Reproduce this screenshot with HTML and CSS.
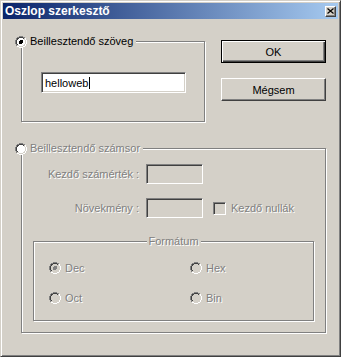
FILE: index.html
```html
<!DOCTYPE html>
<html lang="hu">
<head>
    <meta charset="utf-8">
    <title>Oszlop szerkesztő</title>
    <link rel="stylesheet" href="styles.css">
</head>
<body>
    <svg class="defs" width="0" height="0">
        <symbol id="radio-on" viewBox="0 0 12 12">
            <circle cx="6" cy="6" r="4" fill="#fff"/>
            <path d="M2.1 9.9A5.5 5.5 0 0 1 9.9 2.1" stroke="#808080" fill="none"/>
            <path d="M9.9 2.1A5.5 5.5 0 0 1 2.1 9.9" stroke="#fff" fill="none"/>
            <path d="M2.8 9.2A4.5 4.5 0 0 1 9.2 2.8" stroke="#404040" fill="none"/>
            <path d="M9.2 2.8A4.5 4.5 0 0 1 2.8 9.2" stroke="#d4d0c8" fill="none"/>
            <circle cx="6" cy="6" r="2" fill="#000"/>
        </symbol>
        <symbol id="radio-off" viewBox="0 0 12 12">
            <circle cx="6" cy="6" r="4" fill="#fff"/>
            <path d="M2.1 9.9A5.5 5.5 0 0 1 9.9 2.1" stroke="#808080" fill="none"/>
            <path d="M9.9 2.1A5.5 5.5 0 0 1 2.1 9.9" stroke="#fff" fill="none"/>
            <path d="M2.8 9.2A4.5 4.5 0 0 1 9.2 2.8" stroke="#404040" fill="none"/>
            <path d="M9.2 2.8A4.5 4.5 0 0 1 2.8 9.2" stroke="#d4d0c8" fill="none"/>
        </symbol>
        <symbol id="radio-dis-on" viewBox="0 0 12 12">
            <path d="M2.1 9.9A5.5 5.5 0 0 1 9.9 2.1" stroke="#808080" fill="none"/>
            <path d="M9.9 2.1A5.5 5.5 0 0 1 2.1 9.9" stroke="#fff" fill="none"/>
            <path d="M2.8 9.2A4.5 4.5 0 0 1 9.2 2.8" stroke="#404040" fill="none"/>
            <circle cx="6" cy="6" r="2" fill="#808080"/>
        </symbol>
        <symbol id="radio-dis-off" viewBox="0 0 12 12">
            <path d="M2.1 9.9A5.5 5.5 0 0 1 9.9 2.1" stroke="#808080" fill="none"/>
            <path d="M9.9 2.1A5.5 5.5 0 0 1 2.1 9.9" stroke="#fff" fill="none"/>
            <path d="M2.8 9.2A4.5 4.5 0 0 1 9.2 2.8" stroke="#404040" fill="none"/>
        </symbol>
    </svg>

    <div class="window">
        <div class="titlebar">
            <span class="title">Oszlop szerkesztő</span>
            <span class="close">
                <svg width="7" height="6" viewBox="0 0 7 6"><path d="M0.5 0.5L6.5 5.5M6.5 0.5L0.5 5.5" stroke="#000" stroke-width="1.2"/></svg>
            </span>
        </div>

        <div class="client">
            <div class="top">
                <div class="group g1">
                    <div class="group-title">
                        <svg class="radio" width="12" height="12"><use href="#radio-on"/></svg>
                        <span>Beillesztendő szöveg</span>
                    </div>
                    <div class="edit">helloweb<span class="caret"></span></div>
                </div>
                <div class="buttons">
                    <button class="btn btn-default">OK</button>
                    <button class="btn">Mégsem</button>
                </div>
            </div>

            <div class="group g2">
                <div class="group-title">
                    <svg class="radio" width="12" height="12"><use href="#radio-off"/></svg>
                    <span class="disabled">Beillesztendő számsor</span>
                </div>
                <div class="field-row">
                    <span class="field-label disabled">Kezdő számérték :</span>
                    <div class="edit edit-small"></div>
                </div>
                <div class="field-row row2">
                    <span class="field-label disabled">Növekmény :</span>
                    <div class="edit edit-small"></div>
                    <span class="check"></span>
                    <span class="check-label disabled">Kezdő nullák</span>
                </div>

                <div class="group g3">
                    <div class="group-title centered"><span class="disabled">Formátum</span></div>
                    <div class="option">
                        <svg class="radio" width="12" height="12"><use href="#radio-dis-on"/></svg>
                        <span class="disabled">Dec</span>
                    </div>
                    <div class="option">
                        <svg class="radio" width="12" height="12"><use href="#radio-dis-off"/></svg>
                        <span class="disabled">Hex</span>
                    </div>
                    <div class="option">
                        <svg class="radio" width="12" height="12"><use href="#radio-dis-off"/></svg>
                        <span class="disabled">Oct</span>
                    </div>
                    <div class="option">
                        <svg class="radio" width="12" height="12"><use href="#radio-dis-off"/></svg>
                        <span class="disabled">Bin</span>
                    </div>
                </div>
            </div>
        </div>
    </div>
</body>
</html>
```
FILE: styles.css
```css
* {
    box-sizing: border-box;
}
body {
    margin: 0;
    background: #d4d0c8;
    font-family: "Liberation Sans", Arial, sans-serif;
    font-size: 11px;
    color: #000;
}
.defs {
    position: absolute;
    width: 0;
    height: 0;
}
.window {
    width: 341px;
    height: 357px;
    padding: 2px;
    background: #d4d0c8;
    border: 1px solid;
    border-color: #d4d0c8 #404040 #404040 #d4d0c8;
    box-shadow: inset 1px 1px #fff, inset -1px -1px #808080;
}

/* title bar */
.titlebar {
    height: 16px;
    padding: 0 2px;
    display: flex;
    align-items: center;
    justify-content: space-between;
    background: linear-gradient(to right, #0a246a, #a6caf0);
    color: #fff;
    font-weight: bold;
    font-size: 12px;
}
.close {
    width: 11px;
    height: 11px;
    display: flex;
    align-items: center;
    justify-content: center;
    background: #d4d0c8;
    border: 1px solid;
    border-color: #fff #404040 #404040 #fff;
    box-shadow: inset -1px -1px #808080;
}

/* dialog body */
.client {
    padding: 21px 0 0 18px;
}
.top {
    display: flex;
    align-items: flex-start;
    gap: 16px;
}
.group {
    position: relative;
    border: 1px solid #808080;
    box-shadow: inset 1px 1px #fff, 1px 1px #fff;
}
.group-title {
    position: absolute;
    top: -7px;
    left: -7px;
    height: 13px;
    line-height: 13px;
    padding-right: 3px;
    display: flex;
    align-items: center;
    gap: 3px;
    background: #d4d0c8;
    white-space: nowrap;
}
.group-title.centered {
    left: 50%;
    transform: translateX(-50%);
    padding: 0 2px;
}
.radio {
    flex: none;
    shape-rendering: crispEdges;
}
.disabled {
    color: #808080;
    text-shadow: 1px 1px 0 #fff;
}

.g1 {
    width: 184px;
    height: 81px;
    margin-top: 1px;
    padding: 30px 0 0 19px;
}
.edit {
    width: 145px;
    height: 21px;
    padding: 0 3px;
    display: flex;
    align-items: center;
    background: #fff;
    border: 1px solid;
    border-color: #808080 #fff #fff #808080;
    box-shadow: inset 1px 1px #404040, inset -1px -1px #d4d0c8;
}
.caret {
    width: 1px;
    height: 12px;
    margin-left: 1px;
    background: #000;
}
.edit-small {
    width: 57px;
    height: 20px;
    background: #d4d0c8;
}

.buttons {
    display: flex;
    flex-direction: column;
    gap: 15px;
}
.btn {
    width: 105px;
    height: 23px;
    padding: 0;
    font: inherit;
    color: #000;
    background: #d4d0c8;
    border: 1px solid;
    border-color: #fff #404040 #404040 #fff;
    box-shadow: inset -1px -1px #808080;
}
.btn-default {
    border-color: #000;
    box-shadow: inset 1px 1px #fff, inset -1px -1px #404040, inset -2px -2px #808080;
}

.g2 {
    width: 305px;
    height: 185px;
    margin-top: 26px;
    padding-top: 15px;
}
.field-row {
    display: flex;
    align-items: center;
}
.row2 {
    margin-top: 14px;
}
.field-label {
    width: 117px;
    margin-right: 7px;
    text-align: right;
}
.check {
    width: 13px;
    height: 13px;
    margin-left: 10px;
    margin-right: 5px;
    background: #d4d0c8;
    border: 1px solid;
    border-color: #808080 #fff #fff #808080;
    box-shadow: inset 1px 1px #404040, inset -1px -1px #d4d0c8;
}

.g3 {
    width: 281px;
    height: 80px;
    margin: 23px 0 0 11px;
    padding: 20px 0 0 15px;
    display: grid;
    grid-template-columns: 141px 1fr;
    grid-auto-rows: 12px;
    row-gap: 18px;
}
.option {
    display: flex;
    align-items: center;
    gap: 4px;
}
```
